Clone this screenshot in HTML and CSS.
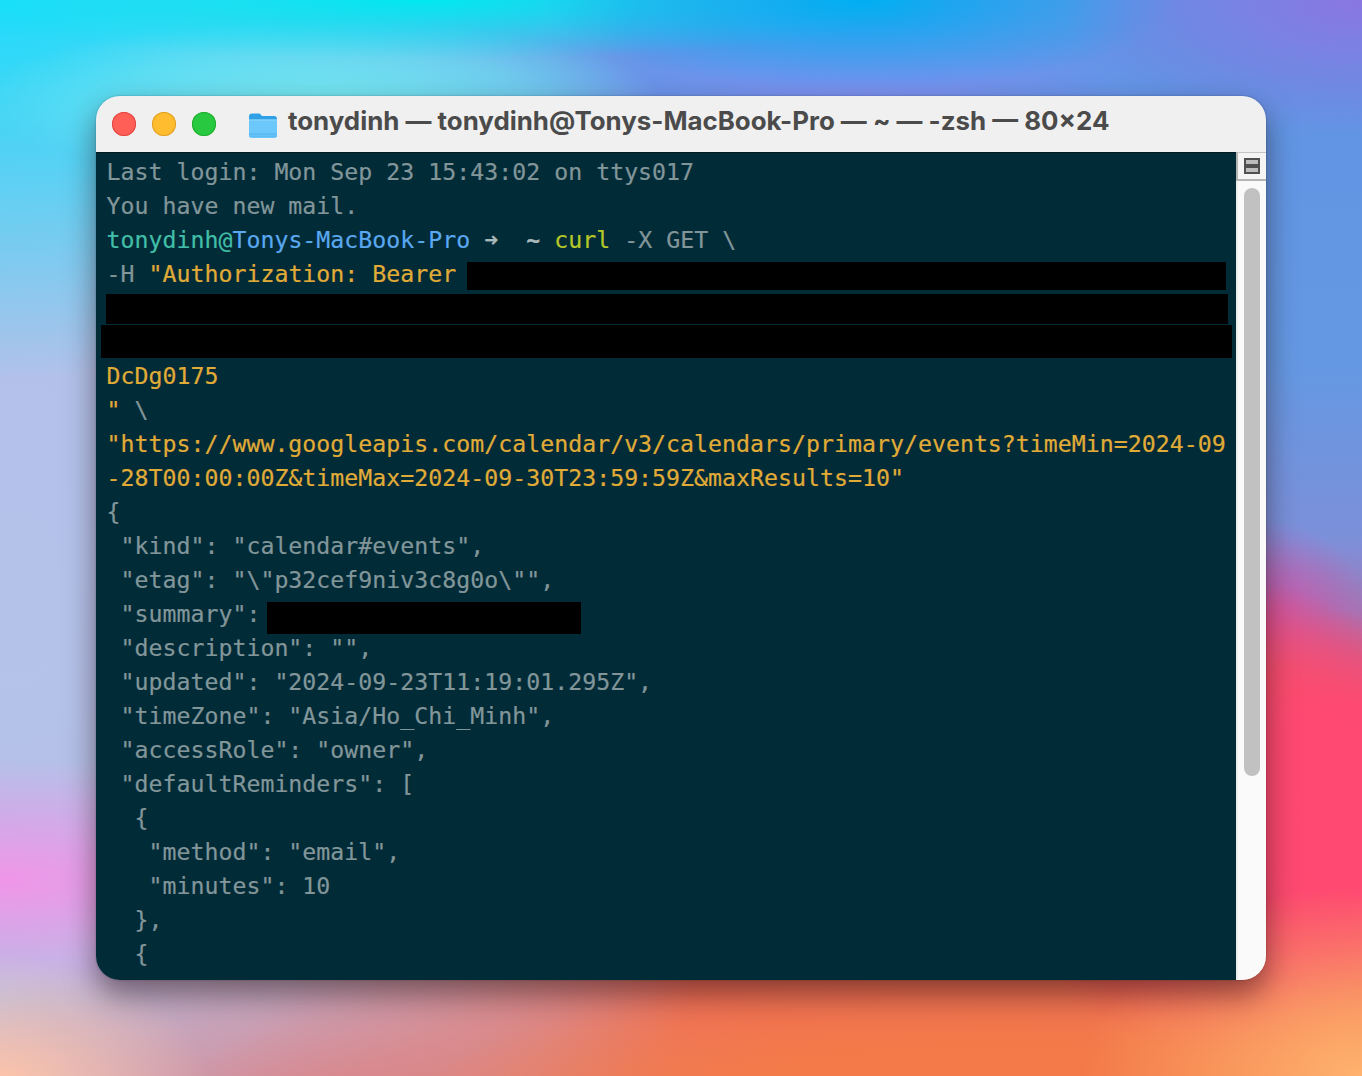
FILE: index.html
```html
<!DOCTYPE html>
<html lang="en">
<head>
<meta charset="utf-8">
<title>Terminal</title>
<link rel="stylesheet" href="styles.css">
</head>
<body>
<main class="desktop">
  <section class="window">
    <header class="titlebar">
      <div class="lights">
        <span class="light red"></span>
        <span class="light yellow"></span>
        <span class="light green"></span>
      </div>
      <svg class="folder" viewBox="0 0 30 28" aria-hidden="true">
        <path d="M1 5.5C1 3.5 2 2.5 4 2.5h6.500c1 0 1.600.3 2.200 1l1.300 1.500h12c2 0 3 1 3 3v3H1z" fill="#2f9fe6"/>
        <path d="M1 8.500h28v16c0 1.600-1 2.500-2.600 2.500H3.600C2 27 1 26.100 1 24.500z" fill="#6cc8fb"/>
        <path d="M1 8.500h28v1H1z" fill="#8fd8fd"/>
        <path d="M1 22.500h28v1H1zM1 24.800h28v.8H1z" fill="#4fb0ec"/>
      </svg>
      <h1 class="title">tonydinh — tonydinh@Tonys-MacBook-Pro — ~ — -zsh — 80×24</h1>
    </header>
    <div class="content">
      <div class="terminal">
<div class="line">Last login: Mon Sep 23 15:43:02 on ttys017</div>
<div class="line">You have new mail.</div>
<div class="line"><span class="teal">tonydinh@</span><span class="blue">Tonys-MacBook-Pro</span> <span class="arrow">➜</span>  <span class="tilde">~</span> <span class="lime">curl</span> -X GET \</div>
<div class="line">-H <span class="gold">"Authorization: Bearer</span> <span class="redact r1"></span></div>
<div class="line"><span class="redact r2"></span></div>
<div class="line"><span class="redact r3"></span></div>
<div class="line gold">DcDg0175</div>
<div class="line"><span class="gold">"</span> \</div>
<div class="line gold">"https://www.googleapis.com/calendar/v3/calendars/primary/events?timeMin=2024-09</div>
<div class="line gold">-28T00:00:00Z&amp;timeMax=2024-09-30T23:59:59Z&amp;maxResults=10"</div>
<div class="line">{</div>
<div class="line"> "kind": "calendar#events",</div>
<div class="line"> "etag": "\"p32cef9niv3c8g0o\"",</div>
<div class="line"> "summary": <span class="redact r4"></span></div>
<div class="line"> "description": "",</div>
<div class="line"> "updated": "2024-09-23T11:19:01.295Z",</div>
<div class="line"> "timeZone": "Asia/Ho_Chi_Minh",</div>
<div class="line"> "accessRole": "owner",</div>
<div class="line"> "defaultReminders": [</div>
<div class="line">  {</div>
<div class="line">   "method": "email",</div>
<div class="line">   "minutes": 10</div>
<div class="line">  },</div>
<div class="line">  {</div>
      </div>
      <aside class="scrollbar">
        <div class="split-button"><span class="split-icon"></span></div>
        <div class="track"><div class="thumb"></div></div>
      </aside>
    </div>
  </section>
</main>
</body>
</html>
```
FILE: styles.css
```css
* { box-sizing: border-box; }
html, body { margin: 0; height: 100%; }
body { overflow: hidden; }

.desktop {
  width: 1362px;
  height: 1076px;
  padding: 96px;
  background:
    radial-gradient(280px 190px at 100% 100%, #ffb26e 0%, rgba(255,178,110,0) 100%),
    radial-gradient(210px 130px at 0 1085px, #ffc4a8 0%, rgba(255,196,168,0) 100%),
    radial-gradient(420px 120px at 0 880px, #f095e8 0%, rgba(240,149,232,0) 100%),
    radial-gradient(600px 170px at 1000px 1130px, #f47a46 0%, rgba(244,122,70,.75) 50%, rgba(244,122,70,0) 100%),
    radial-gradient(480px 240px at 350px 1150px, #e07a7c 0%, rgba(224,122,124,0) 100%),
    radial-gradient(260px 190px at 1362px 800px, #ff4872 0%, rgba(255,72,114,.9) 50%, rgba(255,72,114,0) 100%),
    radial-gradient(240px 240px at 1230px 820px, #f65064 0%, rgba(246,80,100,.95) 60%, rgba(246,80,100,0) 100%),
    radial-gradient(110px 110px at 1266px 630px, #d450a8 0%, rgba(212,80,168,0) 100%),
    radial-gradient(300px 140px at 100% 0, #8a76e0 0%, rgba(138,118,224,0) 100%),
    radial-gradient(320px 90px at 860px 0, #00aef2 0%, rgba(0,174,242,0) 100%),
    radial-gradient(520px 60px at 420px 0, #00e8f0 0%, rgba(0,232,240,0) 100%),
    radial-gradient(340px 80px at 320px 100px, #74e6f0 0%, rgba(116,230,240,.5) 60%, rgba(116,230,240,0) 100%),
    radial-gradient(640px 380px at 0 0, #1edcfa 0%, rgba(30,220,250,.6) 45%, rgba(30,220,250,0) 100%),
    radial-gradient(320px 170px at 860px 130px, #8090f2 0%, rgba(128,144,242,0) 100%),
    radial-gradient(760px 1000px at 0 580px, #b4c2ea 0%, rgba(180,194,234,.95) 55%, rgba(180,194,234,0) 100%),
    linear-gradient(180deg, #5f94e6 0%, #6498e2 360px, #7d90da 540px, #b8689c 660px, #f06060 900px, #f07a50 100%);
}

.window {
  width: 1170px;
  height: 884px;
  border-radius: 24px;
  overflow: hidden;
  display: flex;
  flex-direction: column;
  box-shadow: 0 0 2px rgba(0, 0, 0, .3), 0 14px 30px rgba(30, 10, 10, .5);
}

.titlebar {
  height: 56px;
  flex: none;
  display: flex;
  align-items: center;
  padding-left: 16px;
  background: #f0f0f0;
}

.lights { display: flex; gap: 16px; margin-right: 33px; }
.light { width: 24px; height: 24px; border-radius: 50%; }
.red { background: #ff5f57; box-shadow: inset 0 0 0 1px #e2463f; }
.yellow { background: #febc2e; box-shadow: inset 0 0 0 1px #dfa123; }
.green { background: #28c840; box-shadow: inset 0 0 0 1px #1fad2f; }

.folder { width: 30px; height: 28px; flex: none; margin: 2px 10px 0 -1px; }

.title {
  margin: -7px 0 0;
  font: 700 25.88px/1 Inter, "Liberation Sans", sans-serif;
  color: #4b4b4b;
  white-space: nowrap;
}

.content { flex: 1; display: flex; min-height: 0; }

.terminal {
  flex: 1;
  min-width: 0;
  padding: 2px 0 0 10.5px;
  background: #012b37;
  border-top: 1px solid #001a22;
  color: #82969a;
  font: 23.2px/34px "DejaVu Sans Mono", "Liberation Mono", monospace;
  letter-spacing: .03px;
  -webkit-text-stroke: .2px currentColor;
}

.line { height: 34px; white-space: pre; }

.gold { color: #e0ab36; }
.teal { color: #42bfa8; }
.blue { color: #5aa8ef; }
.lime { color: #b5c827; }
.arrow, .tilde { color: #a9b8b9; font-weight: bold; }

.redact { display: inline-block; background: #000; vertical-align: top; }
.r1 { width: 759px; height: 28px; margin: 5px 0 0 -3px; }
.r2 { width: 1122px; height: 30px; margin: 3px 0 0 -.5px; }
.r3 { width: 1131px; height: 33px; margin: 0 0 0 -5.5px; }
.r4 { width: 314px; height: 32px; margin: 5px 0 0 -7px; }

.scrollbar {
  width: 30px;
  flex: none;
  display: flex;
  flex-direction: column;
  background: #fafafa;
  border-left: 2px solid #eceeee;
}

.split-button {
  height: 29px;
  flex: none;
  display: flex;
  align-items: center;
  justify-content: center;
  background: #f4f4f4;
  border-top: 1px solid #c4c4c4;
  border-bottom: 2px solid #b4b4b4;
  margin-left: -2px;
  border-left: 2px solid #b4b4b4;
}

.split-icon {
  width: 16px;
  height: 16px;
  background: linear-gradient(#bdbdbd, #bdbdbd) 2px 2px / 12px 4px no-repeat,
              linear-gradient(#bdbdbd, #bdbdbd) 2px 10px / 12px 4px no-repeat,
              #505050;
}

.track { flex: 1; padding: 7px 6px 0; }
.thumb { width: 16px; height: 588px; border-radius: 8px; background: #c1c1c1; }
```
